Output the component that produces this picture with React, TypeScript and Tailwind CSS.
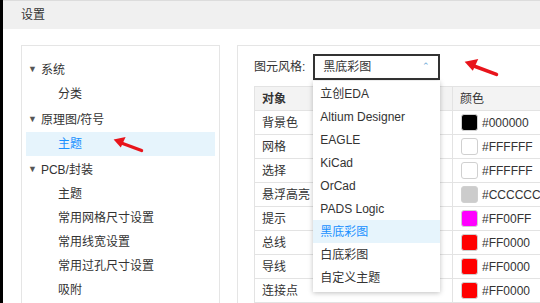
import { Fragment } from "react";

const font = "font-['Liberation_Sans','Noto_Sans_CJK_SC',sans-serif]";

const tree = [
  { title: "系统", children: [{ label: "分类" }] },
  { title: "原理图/符号", children: [{ label: "主题", active: true }] },
  {
    title: "PCB/封装",
    children: [
      { label: "主题" },
      { label: "常用网格尺寸设置" },
      { label: "常用线宽设置" },
      { label: "常用过孔尺寸设置" },
      { label: "吸附" },
    ],
  },
];

const rows = [
  { name: "背景色", color: "#000000" },
  { name: "网格", color: "#FFFFFF" },
  { name: "选择", color: "#FFFFFF" },
  { name: "悬浮高亮", color: "#CCCCCC" },
  { name: "提示", color: "#FF00FF" },
  { name: "总线", color: "#FF0000" },
  { name: "导线", color: "#FF0000" },
  { name: "连接点", color: "#FF0000" },
];

const options = [
  "立创EDA",
  "Altium Designer",
  "EAGLE",
  "KiCad",
  "OrCad",
  "PADS Logic",
  "黑底彩图",
  "白底彩图",
  "自定义主题",
];

function RedArrow({ className }: { className: string }) {
  return (
    <svg className={className} viewBox="0 0 40 22" fill="none">
      <path d="M37 18 L10 8" stroke="#e8141b" strokeWidth="4" strokeLinecap="round" />
      <path d="M2 4 L17 1 L11 14 Z" fill="#e8141b" />
    </svg>
  );
}

export default function App() {
  return (
    <div className={`flex h-[303px] w-[540px] overflow-hidden bg-white text-[12px] text-[#333] ${font}`}>
      <div className="w-[3px] shrink-0 bg-black" />
      <div className="flex min-w-0 flex-1 flex-col">
        <div className="flex h-[29px] shrink-0 items-center border-t border-[#dcdcdc] bg-[#f0f0f0] pl-[18px] text-[12px]">
          设置
        </div>
        <div className="flex flex-1 gap-[17px] pl-[18px] pt-[16px]">
          {/* tree */}
          <div className="w-[199px] shrink-0 border border-b-0 border-[#e5e5e5] px-[4px] pt-[12px]">
            {tree.map((group) => (
              <div key={group.title} className="mb-[2px]">
                <div className="flex h-[24px] items-center gap-[4px] pl-[2px]">
                  <span className="text-[9px] text-[#555]">▼</span>
                  <span>{group.title}</span>
                </div>
                {group.children.map((c) => (
                  <div
                    key={c.label}
                    className={`relative flex h-[24px] items-center pl-[32px] ${
                      c.active ? "bg-[#e6f4fc] text-[#1890ff]" : ""
                    }`}
                  >
                    {c.label}
                    {c.active && <RedArrow className="absolute left-[86px] top-[2px] h-[22px] w-[32px]" />}
                  </div>
                ))}
              </div>
            ))}
          </div>

          {/* settings */}
          <div className="relative min-w-0 flex-1 border border-r-0 border-b-0 border-[#e5e5e5] pl-[16px] pt-[8px]">
            <div className="flex items-center gap-[8px]">
              <span>图元风格:</span>
              <div className="relative flex h-[26px] w-[127px] items-center justify-between border-2 border-[#333] pl-[8px] pr-[8px]">
                <span>黑底彩图</span>
                <span className="text-[9px] text-[#6aa6d6]">⌃</span>
                <RedArrow className="absolute left-[146px] top-[2px] h-[20px] w-[40px]" />
                {/* dropdown */}
                <div className="absolute left-[-2px] top-[25px] z-10 w-[127px] bg-white pb-[3px] pt-[1px] shadow-[0_1px_5px_rgba(0,0,0,0.25)]">
                  {options.map((o) => (
                    <div
                      key={o}
                      className={`flex h-[23px] items-center pl-[7px] ${
                        o === "黑底彩图" ? "bg-[#e6f4fc] text-[#1890ff]" : "text-[#333]"
                      }`}
                    >
                      {o}
                    </div>
                  ))}
                </div>
              </div>
            </div>
            <div className="mt-[6px] grid grid-cols-[198px_1fr] border-l border-t border-[#e3e3e3]">
              <div className="flex h-[24px] items-center border-b border-r border-[#e3e3e3] bg-[#f3f3f3] pl-[7px] font-bold">
                对象
              </div>
              <div className="flex h-[24px] items-center border-b border-[#e3e3e3] bg-[#f3f3f3] pl-[7px]">颜色</div>
              {rows.map((r) => (
                <Fragment key={r.name}>
                  <div className="flex h-[24px] items-center border-b border-r border-[#e3e3e3] pl-[7px]">{r.name}</div>
                  <div className="flex h-[24px] items-center gap-[4px] border-b border-[#e3e3e3] pl-[8px]">
                    <span
                      className="h-[17px] w-[17px] shrink-0 rounded-[3px] border border-[#d0d0d0]"
                      style={{ backgroundColor: r.color }}
                    />
                    <span className="whitespace-nowrap text-[12px]">{r.color}</span>
                  </div>
                </Fragment>
              ))}
            </div>
          </div>
        </div>
      </div>
    </div>
  );
}
